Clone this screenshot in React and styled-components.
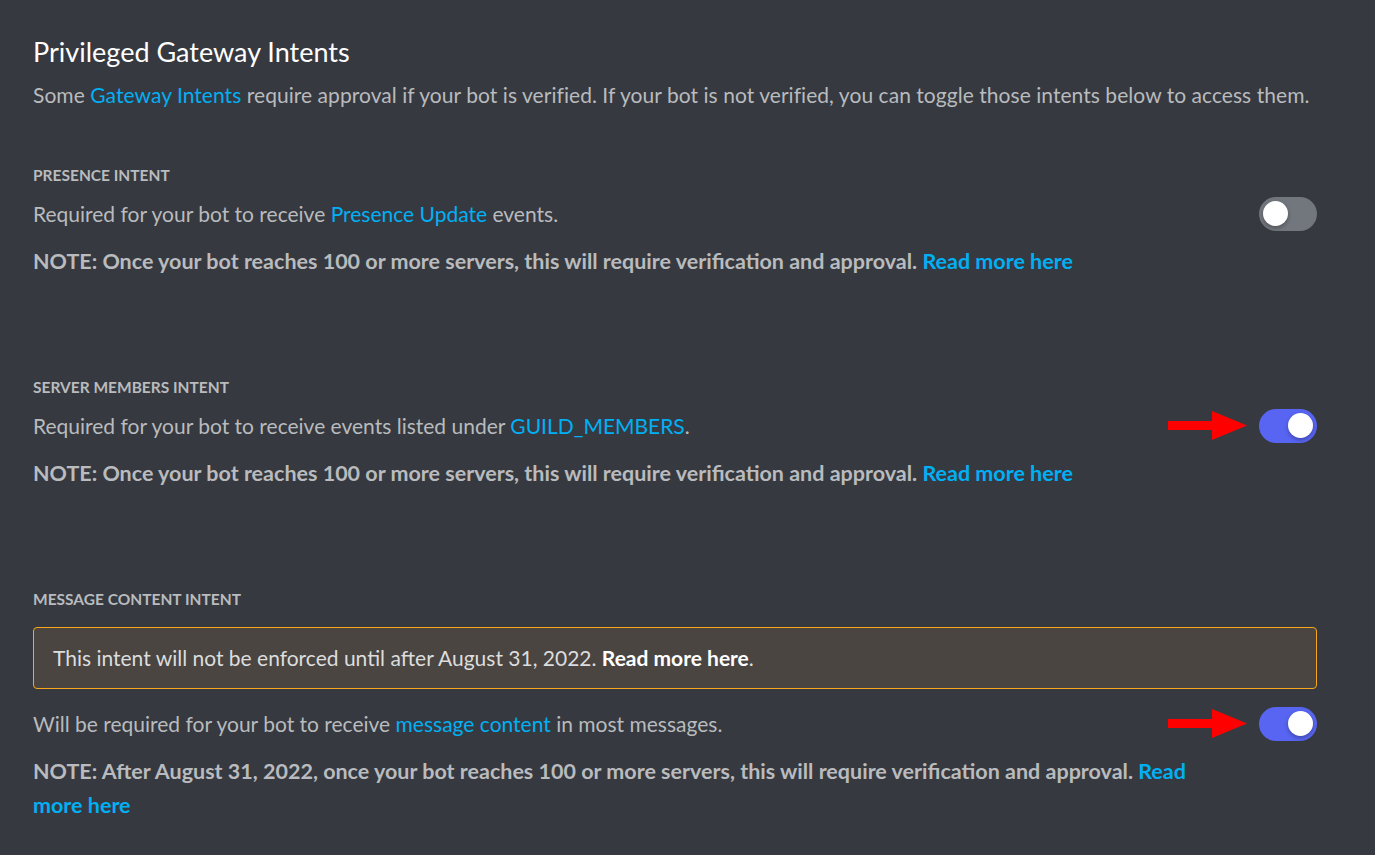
import React from 'react';
import styled, { createGlobalStyle } from 'styled-components';

const GlobalStyle = createGlobalStyle`
  html, body {
    margin: 0;
    padding: 0;
    background: #36393f;
  }
  body {
    font-family: Lato, "Noto Sans", sans-serif;
    -webkit-font-smoothing: antialiased;
  }
`;

const Page = styled.div`
  min-height: 855px;
  box-sizing: border-box;
  padding: 36px 58px 40px 33px;
  background: #36393f;
  color: #b9bbbe;
`;

const Title = styled.h2`
  margin: 0;
  font-size: 27px;
  line-height: 32px;
  font-weight: 400;
  color: #ffffff;
`;

const Subtitle = styled.p`
  margin: 15px 0 0;
  font-size: 21px;
  line-height: 24px;
  letter-spacing: 0.05px;
  color: #b9bbbe;
`;

const Link = styled.a`
  color: #00b0f4;
  text-decoration: none;
  font-weight: inherit;
`;

const Section = styled.section`
  margin-top: ${p => p.$first ? 59 : 100}px;
`;

const Header = styled.h5`
  margin: 0;
  font-size: 15.5px;
  line-height: 18px;
  font-weight: 700;
  text-transform: uppercase;
  color: #b9bbbe;
`;

const Row = styled.div`
  display: flex;
  align-items: center;
  justify-content: space-between;
  margin-top: ${p => p.$gap ?? 13}px;
  height: 34px;
`;

const Description = styled.div`
  font-size: 21px;
  line-height: 24px;
  color: #b9bbbe;
`;

const Controls = styled.div`
  display: flex;
  align-items: center;
  gap: 12px;
`;

const Track = styled.div`
  position: relative;
  width: 58px;
  height: 34px;
  border-radius: 17px;
  background: ${p => p.$on ? '#5865f2' : '#72767d'};
  flex-shrink: 0;
`;

const Knob = styled.div`
  position: absolute;
  top: 4px;
  left: ${p => p.$on ? 29 : 4}px;
  width: 25px;
  height: 25px;
  border-radius: 50%;
  background: #ffffff;
  box-shadow: 0 2px 4px rgba(0, 0, 0, 0.3);
`;

const Note = styled.p`
  margin: 13px 0 0;
  max-width: 1200px;
  font-size: 21.5px;
  line-height: 34px;
  font-weight: 700;
  color: #b9bbbe;
`;

const Notice = styled.div`
  margin-top: 19px;
  box-sizing: border-box;
  height: 62px;
  display: flex;
  align-items: center;
  padding: 0 19px;
  border: 1px solid #faa61a;
  border-radius: 4px;
  background: #4a4540;
  font-size: 21px;
  line-height: 24px;
  color: #dcddde;

  strong {
    color: #ffffff;
    font-weight: 700;
  }
`;

function Arrow() {
  return (
    <svg width="79" height="30" viewBox="0 0 79 30">
      <rect x="0" y="10" width="46" height="9" fill="#ff0000" />
      <polygon points="44,0 79,14.5 44,29" fill="#ff0000" />
    </svg>
  );
}

function Toggle({ on, arrow }) {
  return (
    <Controls>
      {arrow && <Arrow />}
      <Track $on={on}>
        <Knob $on={on} />
      </Track>
    </Controls>
  );
}

const readMore = <Link href="#">Read more here</Link>;

export default function App() {
  return (
    <Page>
      <GlobalStyle />
      <Title>Privileged Gateway Intents</Title>
      <Subtitle>
        Some <Link href="#">Gateway Intents</Link> require approval if your bot is verified. If your bot is not verified, you can toggle those intents below to access them.
      </Subtitle>

      <Section $first>
        <Header>Presence Intent</Header>
        <Row>
          <Description>
            Required for your bot to receive <Link href="#">Presence Update</Link> events.
          </Description>
          <Toggle on={false} />
        </Row>
        <Note>
          NOTE: Once your bot reaches 100 or more servers, this will require verification and approval. {readMore}
        </Note>
      </Section>

      <Section>
        <Header>Server Members Intent</Header>
        <Row>
          <Description>
            Required for your bot to receive events listed under <Link href="#">GUILD_MEMBERS</Link>.
          </Description>
          <Toggle on arrow />
        </Row>
        <Note>
          NOTE: Once your bot reaches 100 or more servers, this will require verification and approval. {readMore}
        </Note>
      </Section>

      <Section>
        <Header>Message Content Intent</Header>
        <Notice>
          <span>
            This intent will not be enforced until after August 31, 2022. <strong>Read more here</strong>.
          </span>
        </Notice>
        <Row $gap={18}>
          <Description>
            Will be required for your bot to receive <Link href="#">message content</Link> in most messages.
          </Description>
          <Toggle on arrow />
        </Row>
        <Note>
          NOTE: After August 31, 2022, once your bot reaches 100 or more servers, this will require verification and approval. {readMore}
        </Note>
      </Section>
    </Page>
  );
}
